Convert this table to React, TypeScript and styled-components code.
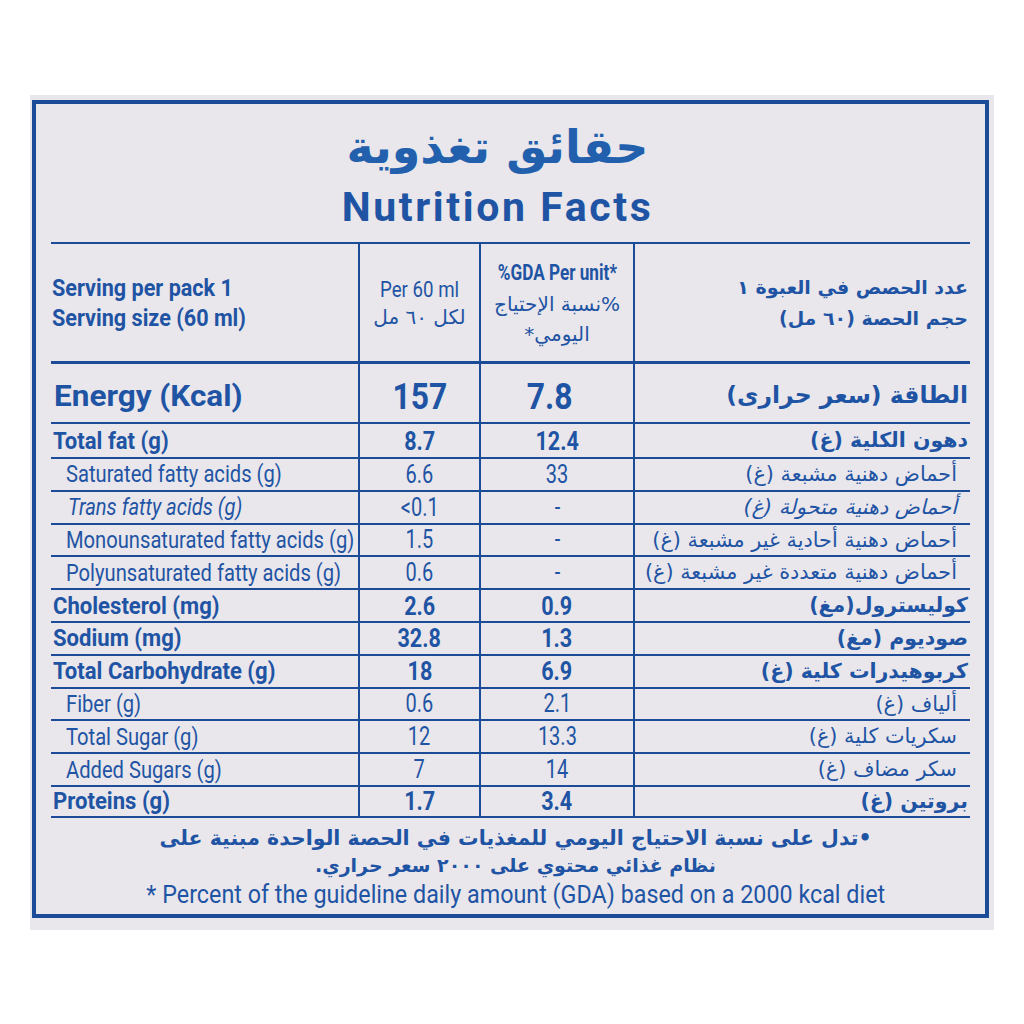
import React from 'react';
import styled, { createGlobalStyle } from 'styled-components';

const BLUE = '#1f54a4';
const LINE = '#1c4b98';
const LATIN = 'Roboto, "Liberation Sans", Arial, sans-serif';
const ARABIC = '"DejaVu Sans", sans-serif';

const Global = createGlobalStyle`
  html, body { margin: 0; padding: 0; background: #ffffff; }
  body { font-family: ${LATIN}; }
  * { box-sizing: border-box; }
`;

const Card = styled.div`
  margin: 95px 0 0 30px;
  width: 964px;
  height: 835px;
  padding: 5px 5px 12px 2px;
  background: #e9e7eb;
`;

const Frame = styled.div`
  width: 957px;
  height: 818px;
  border: 4px solid ${LINE};
  padding: 0 15px;
  display: flex;
  flex-direction: column;
  color: ${BLUE};
`;

const TitleBlock = styled.div`
  height: 138px;
  display: flex;
  flex-direction: column;
  align-items: center;
  padding: 10px 26px 0 0;
`;

const ArabicTitle = styled.div`
  font-family: ${ARABIC};
  font-weight: bold;
  font-size: 46px;
  line-height: 66px;
  direction: rtl;
  color: #2260ad;
`;

const EnglishTitle = styled.div`
  font-family: ${LATIN};
  font-weight: bold;
  font-size: 41px;
  line-height: 54px;
  letter-spacing: 2.6px;
`;

const Table = styled.div`
  display: flex;
  flex-direction: column;
  border-bottom: 2px solid ${LINE};
`;

const Row = styled.div<{ $h: number; $top?: number }>`
  display: grid;
  grid-template-columns: 307px 121px 154px 337px;
  height: ${(p) => p.$h}px;
  border-top: ${(p) => p.$top ?? 2}px solid ${LINE};
`;

const Cell = styled.div<{ $divider?: boolean; $justify?: string; $pl?: number; $pr?: number; $pt?: number }>`
  display: flex;
  align-items: center;
  justify-content: ${(p) => p.$justify ?? 'flex-start'};
  min-width: 0;
  white-space: nowrap;
  padding: ${(p) => p.$pt ?? 0}px ${(p) => p.$pr ?? 0}px 0 ${(p) => p.$pl ?? 0}px;
  border-left: ${(p) => (p.$divider ? `2px solid ${LINE}` : 'none')};
`;

const Latin = styled.span<{ $bold?: boolean; $italic?: boolean; $size: number; $sx: number; $origin?: string }>`
  display: inline-block;
  font-family: ${LATIN};
  font-weight: ${(p) => (p.$bold ? 'bold' : 'normal')};
  font-style: ${(p) => (p.$italic ? 'italic' : 'normal')};
  font-size: ${(p) => p.$size}px;
  line-height: 1;
  white-space: nowrap;
  transform: scaleX(${(p) => p.$sx});
  transform-origin: ${(p) => p.$origin ?? 'left center'};
`;

const Arabic = styled.span<{ $bold?: boolean; $italic?: boolean; $size: number }>`
  display: inline-block;
  direction: rtl;
  font-family: ${ARABIC};
  font-weight: ${(p) => (p.$bold ? 'bold' : 'normal')};
  font-style: ${(p) => (p.$italic ? 'italic' : 'normal')};
  font-size: ${(p) => p.$size}px;
  line-height: 1;
  white-space: nowrap;
`;

const Stack = styled.div<{ $align: 'flex-start' | 'center' | 'flex-end'; $gap: number }>`
  display: flex;
  flex-direction: column;
  align-items: ${(p) => p.$align};
  gap: ${(p) => p.$gap}px;
  width: 100%;
`;

const Footer = styled.div`
  display: flex;
  flex-direction: column;
  align-items: center;
  padding: 6px 0 0 10px;
`;

const FootLine = styled.div`
  height: 28px;
  display: flex;
  align-items: center;
  justify-content: center;
`;

type Kind = 'bold' | 'sub' | 'italic';

interface Item {
  en: string;
  a: string;
  b: string;
  ar: string;
  kind: Kind;
  h: number;
}

const rows: Item[] = [
  { en: 'Total fat (g)', a: '8.7', b: '12.4', ar: 'دهون الكلية (غ)', kind: 'bold', h: 35 },
  { en: 'Saturated fatty acids (g)', a: '6.6', b: '33', ar: 'أحماض دهنية مشبعة (غ)', kind: 'sub', h: 32.8 },
  { en: 'Trans fatty acids (g)', a: '<0.1', b: '-', ar: 'أحماض دهنية متحولة (غ)', kind: 'italic', h: 32.8 },
  { en: 'Monounsaturated fatty acids (g)', a: '1.5', b: '-', ar: 'أحماض دهنية أحادية غير مشبعة (غ)', kind: 'sub', h: 32.8 },
  { en: 'Polyunsaturated fatty acids (g)', a: '0.6', b: '-', ar: 'أحماض دهنية متعددة غير مشبعة (غ)', kind: 'sub', h: 32.8 },
  { en: 'Cholesterol (mg)', a: '2.6', b: '0.9', ar: 'كوليسترول(مغ)', kind: 'bold', h: 32.8 },
  { en: 'Sodium (mg)', a: '32.8', b: '1.3', ar: 'صوديوم (مغ)', kind: 'bold', h: 32.8 },
  { en: 'Total Carbohydrate (g)', a: '18', b: '6.9', ar: 'كربوهيدرات كلية (غ)', kind: 'bold', h: 32.8 },
  { en: 'Fiber (g)', a: '0.6', b: '2.1', ar: 'ألياف (غ)', kind: 'sub', h: 32.8 },
  { en: 'Total Sugar (g)', a: '12', b: '13.3', ar: 'سكريات كلية (غ)', kind: 'sub', h: 32.8 },
  { en: 'Added Sugars (g)', a: '7', b: '14', ar: 'سكر مضاف (غ)', kind: 'sub', h: 32.8 },
  { en: 'Proteins (g)', a: '1.7', b: '3.4', ar: 'بروتين (غ)', kind: 'bold', h: 31 },
];

export default function App() {
  return (
    <>
      <Global />
      <Card>
        <Frame>
          <TitleBlock>
            <ArabicTitle>حقائق تغذوية</ArabicTitle>
            <EnglishTitle>Nutrition Facts</EnglishTitle>
          </TitleBlock>
          <Table>
            <Row $h={119}>
              <Cell $pl={1}>
                <Stack $align="flex-start" $gap={6}>
                  <Latin $bold $size={24} $sx={0.9}>Serving per pack 1</Latin>
                  <Latin $bold $size={24} $sx={0.9}>Serving size (60 ml)</Latin>
                </Stack>
              </Cell>
              <Cell $divider>
                <Stack $align="center" $gap={6}>
                  <Latin $size={22} $sx={0.85} $origin="center">Per 60 ml</Latin>
                  <Arabic $size={20}>لكل ٦٠ مل</Arabic>
                </Stack>
              </Cell>
              <Cell $divider>
                <Stack $align="center" $gap={10}>
                  <Latin $bold $size={22} $sx={0.78} $origin="center">%GDA Per unit*</Latin>
                  <Arabic $size={20}>%نسبة الإحتياج</Arabic>
                  <Arabic $size={20}>اليومي*</Arabic>
                </Stack>
              </Cell>
              <Cell $divider $pr={2}>
                <Stack $align="flex-end" $gap={12}>
                  <Arabic $bold $size={19}>عدد الحصص في العبوة ١</Arabic>
                  <Arabic $bold $size={19}>حجم الحصة (٦٠ مل)</Arabic>
                </Stack>
              </Cell>
            </Row>
            <Row $h={61} $top={3}>
              <Cell $pl={3} $pt={6}>
                <Latin $bold $size={30} $sx={1.05}>Energy (Kcal)</Latin>
              </Cell>
              <Cell $divider $justify="center" $pt={6}>
                <Latin $bold $size={37} $sx={0.86} $origin="center">157</Latin>
              </Cell>
              <Cell $divider $justify="center" $pr={14} $pt={6}>
                <Latin $bold $size={37} $sx={0.86} $origin="center">7.8</Latin>
              </Cell>
              <Cell $divider $justify="flex-end" $pr={2} $pt={6}>
                <Arabic $bold $size={23.5}>الطاقة (سعر حرارى)</Arabic>
              </Cell>
            </Row>
            {rows.map((r) => {
              const bold = r.kind === 'bold';
              const italic = r.kind === 'italic';
              return (
                <Row key={r.en} $h={r.h}>
                  <Cell $pl={bold ? 2 : italic ? 17 : 15}>
                    <Latin $bold={bold} $italic={italic} $size={24} $sx={bold ? 0.92 : 0.84}>
                      {r.en}
                    </Latin>
                  </Cell>
                  <Cell $divider $justify="center">
                    <Latin $bold={bold} $size={bold ? 26 : 25} $sx={bold ? 0.83 : 0.8} $origin="center">
                      {r.a}
                    </Latin>
                  </Cell>
                  <Cell $divider $justify="center">
                    <Latin $bold={bold} $size={bold ? 26 : 25} $sx={bold ? 0.83 : 0.8} $origin="center">
                      {r.b}
                    </Latin>
                  </Cell>
                  <Cell $divider $justify="flex-end" $pr={bold ? 2 : 13}>
                    <Arabic $bold={bold} $italic={italic} $size={bold ? 20.5 : 20.8}>
                      {r.ar}
                    </Arabic>
                  </Cell>
                </Row>
              );
            })}
          </Table>
          <Footer>
            <FootLine>
              <Arabic $bold $size={20.5}>•تدل على نسبة الاحتياج اليومي للمغذيات في الحصة الواحدة مبنية على</Arabic>
            </FootLine>
            <FootLine>
              <Arabic $bold $size={19}>نظام غذائي محتوي على ٢٠٠٠ سعر حراري.</Arabic>
            </FootLine>
            <FootLine>
              <Latin $size={26.5} $sx={0.88} $origin="center">
                * Percent of the guideline daily amount (GDA) based on a 2000 kcal diet
              </Latin>
            </FootLine>
          </Footer>
        </Frame>
      </Card>
    </>
  );
}
